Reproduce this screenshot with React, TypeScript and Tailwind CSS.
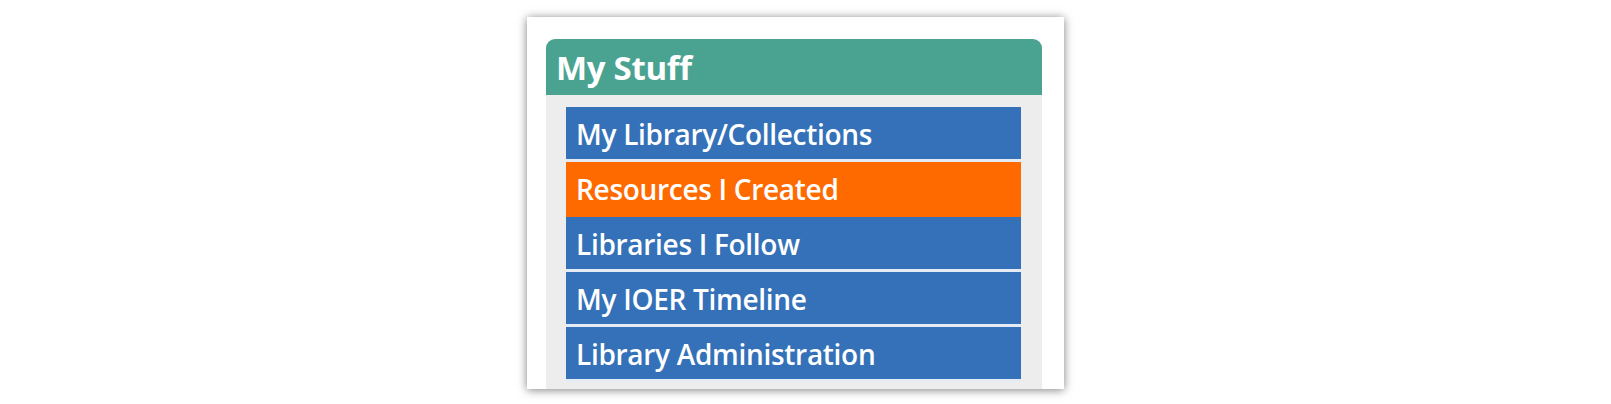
const ITEMS = [
  { label: "My Library/Collections", active: false },
  { label: "Resources I Created", active: true },
  { label: "Libraries I Follow", active: false },
  { label: "My IOER Timeline", active: false },
  { label: "Library Administration", active: false },
];

export default function App() {
  return (
    <div className="w-[1611px] h-[404px] bg-white overflow-hidden font-['Open_Sans',sans-serif]">
      <div className="ml-[527px] mt-[17px] w-[537px] h-[372px] bg-white shadow-[0_1px_9px_rgba(0,0,0,0.5)] pl-[19px] pr-[22px] pt-[22px] flex flex-col">
        <div className="h-[56px] bg-[#4aa391] rounded-t-[9px] pl-[10px] flex items-center">
          <h2 className="text-white font-bold text-[33px] leading-none tracking-[-0.3px]">My Stuff</h2>
        </div>
        <div className="flex-1 bg-[#ededed] pt-[12px] pl-[20px] pr-[21px] overflow-hidden">
          <ul className="flex flex-col">
            {ITEMS.map((item) => (
              <li
                key={item.label}
                className={`h-[55px] pl-[10px] pt-[2px] flex items-center border-b-[3px] text-white text-[28px] font-semibold tracking-[-0.3px] [font-variant-ligatures:none] ${
                  item.active
                    ? "bg-[#ff6a00] border-[#ff6a00]"
                    : "bg-[#3471b8] border-[#e4ebf4]"
                }`}
              >
                {item.label}
              </li>
            ))}
          </ul>
        </div>
      </div>
    </div>
  );
}
